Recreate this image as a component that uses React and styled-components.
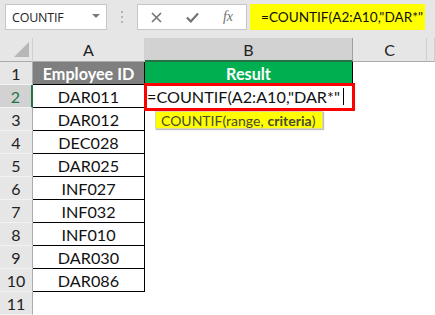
import React from "react";
import styled, { createGlobalStyle, css } from "styled-components";

const GlobalStyle = createGlobalStyle`
  html, body { margin: 0; padding: 0; background: #ffffff; }
  * { box-sizing: border-box; }
`;

const Frame = styled.div`
  width: 435px;
  height: 315px;
  overflow: hidden;
  background: #ffffff;
  font-family: Lato, "Open Sans", sans-serif;
`;

const Toolbar = styled.div`
  height: 38px;
  background: #e6e6e6;
  display: flex;
  align-items: flex-start;
  padding: 4px 0 0 5px;
`;

const NameBox = styled.div`
  flex: none;
  width: 102px;
  height: 26px;
  background: #ffffff;
  border: 1px solid #c6c6c6;
  display: flex;
  align-items: center;
  justify-content: space-between;
  padding: 0 6px 0 6px;
`;

const NameText = styled.span`
  font-family: "Open Sans", sans-serif;
  font-size: 12.5px;
  color: #222;
  letter-spacing: -0.2px;
`;

const DropArrow = styled.span`
  width: 0;
  height: 0;
  border-left: 4px solid transparent;
  border-right: 4px solid transparent;
  border-top: 4px solid #7a7a7a;
  margin-top: -3px;
`;

const Grip = styled.div`
  flex: none;
  width: 30px;
  height: 26px;
  display: flex;
  flex-direction: column;
  align-items: center;
  justify-content: center;
  gap: 3px;
`;

const Dot = styled.span`
  width: 2px;
  height: 2px;
  background: #b4b4b4;
`;

const FormulaButtons = styled.div`
  flex: none;
  width: 110px;
  height: 26px;
  background: #ffffff;
  border: 1px solid #c6c6c6;
  display: flex;
  align-items: center;
  padding-left: 6px;
  gap: 12px;
`;

const IconButton = styled.span`
  width: 24px;
  height: 20px;
  display: flex;
  align-items: center;
  justify-content: center;
  color: #737373;
`;

const FxLabel = styled.span`
  font-family: "Liberation Serif", serif;
  font-style: italic;
  font-size: 14px;
  color: #6f6f6f;
`;

const FormulaInput = styled.div`
  flex: none;
  margin-left: 3px;
  width: 175px;
  height: 26px;
  background: #ffff00;
  display: flex;
  align-items: center;
  padding-left: 11px;
  font-family: Lato, sans-serif;
  font-size: 13.6px;
  color: #111;
  white-space: nowrap;
  overflow: hidden;
`;

const Sheet = styled.div`
  display: grid;
  grid-template-columns: 33px 112px 208px 74px 8px;
  grid-template-rows: 24px repeat(11, 23px);
  font-family: Lato, sans-serif;
`;

const Corner = styled.div`
  background: #e6e6e6;
  border-right: 1px solid #d0d0d0;
  border-bottom: 1px solid #ababab;
  display: flex;
  align-items: flex-end;
  justify-content: flex-end;
  padding: 0 3px 4px 0;
`;

const CornerTriangle = styled.span`
  width: 0;
  height: 0;
  border-left: 15px solid transparent;
  border-bottom: 15px solid #b7b7b7;
`;

const ColHeader = styled.div`
  background: ${(p) => (p.$selected ? "#d2d2d2" : "#e6e6e6")};
  border-right: 1px solid ${(p) => (p.$selected ? "#9f9f9f" : "#d0d0d0")};
  border-bottom: ${(p) => (p.$selected ? "2px solid #217346" : "1px solid #ababab")};
  display: flex;
  align-items: center;
  justify-content: center;
  font-size: 16px;
  color: #222;
`;

const RowHeader = styled.div`
  background: ${(p) => (p.$selected ? "#d2d2d2" : "#e6e6e6")};
  border-right: ${(p) => (p.$selected ? "2px solid #217346" : "1px solid #ababab")};
  border-bottom: 1px solid #f2f2f2;
  display: flex;
  align-items: center;
  justify-content: center;
  font-size: 16px;
  color: ${(p) => (p.$selected ? "#217346" : "#222")};
`;

const variants = {
  idHead: css`
    background: #7f7f7f;
    color: #ffffff;
    font-weight: 700;
    justify-content: center;
    border-right: 1px solid #000;
    border-bottom: 1px solid #000;
  `,
  resultHead: css`
    background: #00b050;
    color: #ffffff;
    font-weight: 700;
    justify-content: center;
    border-right: 1px solid #000;
  `,
  id: css`
    justify-content: center;
    border-right: 1px solid #000;
    border-bottom: 1px solid #000;
  `,
  active: css`
    justify-content: flex-start;
    padding-left: 2px;
    position: relative;
    overflow: visible;
    z-index: 2;
  `,
  empty: css``,
};

const Cell = styled.div`
  display: flex;
  align-items: center;
  font-size: 16.2px;
  color: #111;
  white-space: nowrap;
  ${(p) => variants[p.$variant]}
`;

const Caret = styled.span`
  display: inline-block;
  width: 1px;
  height: 17px;
  background: #000;
  margin-left: 3px;
`;

const RedFrame = styled.div`
  position: absolute;
  left: -1px;
  top: -2px;
  right: -2px;
  bottom: -3px;
  border: 3px solid #ff0000;
  pointer-events: none;
`;

const Tooltip = styled.div`
  position: absolute;
  left: 10px;
  top: 26px;
  height: 18px;
  padding: 0 7px 0 5px;
  background: #ffff00;
  border: 1px solid #d9d9a0;
  box-shadow: 1px 1px 1px rgba(0, 0, 0, 0.25);
  display: flex;
  align-items: center;
  font-size: 14px;
  color: #4a4a30;
  white-space: nowrap;
  & b { font-weight: 700; margin-left: 4px; }
`;

const ids = [
  "DAR011",
  "DAR012",
  "DEC028",
  "DAR025",
  "INF027",
  "INF032",
  "INF010",
  "DAR030",
  "DAR086",
];

function XIcon() {
  return (
    <svg width="11" height="11" viewBox="0 0 11 11">
      <path d="M1 1 L10 10 M10 1 L1 10" stroke="currentColor" strokeWidth="1.6" fill="none" />
    </svg>
  );
}

function CheckIcon() {
  return (
    <svg width="13" height="11" viewBox="0 0 13 11">
      <path d="M1 5.5 L4.8 9.5 L12 1.5" stroke="currentColor" strokeWidth="2.2" fill="none" />
    </svg>
  );
}

export default function App() {
  const formula = '=COUNTIF(A2:A10,"DAR*"';
  const rows = [];
  for (let r = 1; r <= 11; r++) {
    let a = null;
    let b = null;
    if (r === 1) {
      a = <Cell $variant="idHead">Employee ID</Cell>;
      b = <Cell $variant="resultHead">Result</Cell>;
    } else if (r === 2) {
      a = <Cell $variant="id">{ids[0]}</Cell>;
      b = (
        <Cell $variant="active">
          {formula}
          <Caret />
          <RedFrame />
          <Tooltip>
            COUNTIF(range,<b>criteria</b>)
          </Tooltip>
        </Cell>
      );
    } else if (r <= 10) {
      a = <Cell $variant="id">{ids[r - 2]}</Cell>;
      b = <Cell $variant="empty" />;
    } else {
      a = <Cell $variant="empty" />;
      b = <Cell $variant="empty" />;
    }
    rows.push(
      <React.Fragment key={r}>
        <RowHeader $selected={r === 2}>{r}</RowHeader>
        {a}
        {b}
        <Cell $variant="empty" />
        <Cell $variant="empty" />
      </React.Fragment>
    );
  }

  return (
    <Frame>
      <GlobalStyle />
      <Toolbar>
        <NameBox>
          <NameText>COUNTIF</NameText>
          <DropArrow />
        </NameBox>
        <Grip>
          <Dot />
          <Dot />
          <Dot />
        </Grip>
        <FormulaButtons>
          <IconButton>
            <XIcon />
          </IconButton>
          <IconButton>
            <CheckIcon />
          </IconButton>
          <IconButton>
            <FxLabel>fx</FxLabel>
          </IconButton>
        </FormulaButtons>
        <FormulaInput>{formula}</FormulaInput>
      </Toolbar>
      <Sheet>
        <Corner>
          <CornerTriangle />
        </Corner>
        <ColHeader>A</ColHeader>
        <ColHeader $selected>B</ColHeader>
        <ColHeader>C</ColHeader>
        <ColHeader />
        {rows}
      </Sheet>
    </Frame>
  );
}
